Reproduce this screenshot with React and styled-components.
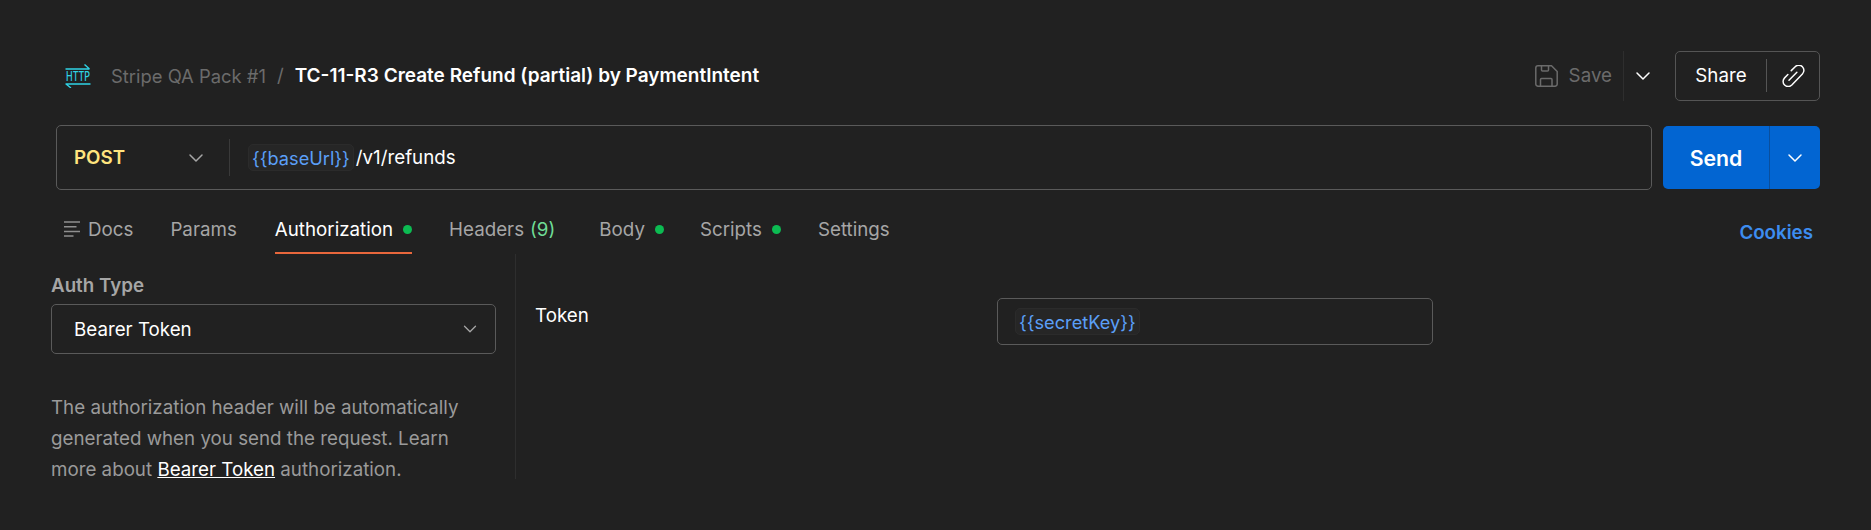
import React from "react"
import styled, { createGlobalStyle } from "styled-components"
import { ChevronDown } from "lucide-react"

const GlobalStyle = createGlobalStyle`
  html, body {
    margin: 0;
    padding: 0;
    background: #212121;
    color: #fff;
    font-family: Inter, "Liberation Sans", sans-serif;
    overflow: hidden;
  }
  * {
    box-sizing: border-box;
  }
`

const Page = styled.div`
  width: 1871px;
  height: 530px;
  padding: 50px 51px 0 56px;
  background: #212121;
`

const TitleRow = styled.div`
  display: flex;
  align-items: center;
  justify-content: space-between;
  height: 51px;
  padding-left: 9px;
`

const Crumbs = styled.div`
  display: flex;
  align-items: center;
  font-size: 18.75px;
`

const Collection = styled.span`
  margin-left: 20px;
  font-size: 18.4px;
  color: #6b6b6b;
`

const Slash = styled.span`
  margin: 0 11px;
  color: #6b6b6b;
`

const RequestName = styled.span`
  font-size: 19px;
  font-weight: 600;
  color: #fff;
`

const TitleActions = styled.div`
  display: flex;
  align-items: center;
`

const SaveLabel = styled.span`
  display: flex;
  align-items: center;
  gap: 11px;
  font-size: 18.75px;
  color: #6b6b6b;
`

const SaveCaret = styled.span`
  display: flex;
  align-items: center;
  justify-content: center;
  width: 38px;
  height: 50px;
  margin-left: 11px;
  border-left: 1px solid #2e2e2e;
  color: #fff;
`

const ShareGroup = styled.div`
  display: flex;
  align-items: center;
  width: 145px;
  height: 50px;
  margin-left: 14px;
  border: 1px solid #555;
  border-radius: 5px;
`

const ShareLabel = styled.span`
  width: 91px;
  height: 33px;
  display: flex;
  align-items: center;
  justify-content: center;
  border-right: 1px solid #555;
  font-size: 18.75px;
`

const ShareIcon = styled.span`
  flex: 1;
  display: flex;
  align-items: center;
  justify-content: center;
`

const UrlRow = styled.div`
  display: flex;
  gap: 11px;
  margin-top: 24px;
`

const UrlBox = styled.div`
  flex: 1;
  display: flex;
  align-items: center;
  height: 65px;
  border: 1px solid #5a5a5a;
  border-radius: 5px;
`

const MethodSelect = styled.div`
  display: flex;
  align-items: center;
  justify-content: space-between;
  width: 173px;
  height: 37px;
  padding: 0 21px 0 17px;
  margin-right: 18px;
  border-right: 1px solid #3a3a3a;
  color: #a6a6a6;
`

const Method = styled.span`
  font-size: 18.75px;
  font-weight: 600;
  color: #ffe47e;
`

const Variable = styled.span`
  display: inline-flex;
  align-items: center;
  height: 27px;
  padding: 0 3px;
  border: 1px solid #2b2b2b;
  border-radius: 5px;
  background: #262626;
  color: #5b9ff7;
  font-size: 18.2px;
`

const UrlPath = styled.span`
  margin-left: 2px;
  font-size: 18.75px;
  color: #fff;
`

const SendGroup = styled.div`
  display: flex;
  width: 157px;
  height: 63px;
  margin-top: 1px;
  border-radius: 5px;
  background: #0265d2;
`

const SendLabel = styled.span`
  width: 107px;
  display: flex;
  align-items: center;
  justify-content: center;
  font-size: 21.25px;
  font-weight: 600;
  border-right: 1px solid #0a4f9e;
`

const SendCaret = styled.span`
  flex: 1;
  display: flex;
  align-items: center;
  justify-content: center;
`

const TabRow = styled.div`
  display: flex;
  align-items: flex-start;
  justify-content: space-between;
  height: 64px;
  padding-right: 7px;
`

const Tabs = styled.div`
  display: flex;
  padding-top: 24px;
  padding-left: 8px;
`

const Tab = styled.div`
  display: flex;
  align-items: center;
  gap: 10px;
  height: 40px;
  padding-bottom: 8px;
  margin-right: ${(p) => p.$gap}px;
  font-size: 18.75px;
  color: ${(p) => (p.$active ? "#fff" : "#a6a6a6")};
  border-bottom: 2px solid ${(p) => (p.$active ? "#e8673c" : "transparent")};
`

const Dot = styled.span`
  width: 9px;
  height: 9px;
  border-radius: 50%;
  background: #0cbb52;
`

const Count = styled.span`
  margin-left: -4px;
  color: #6fdc96;
`

const DocsIcon = styled.svg`
  width: 16px;
  height: 16px;
  margin-right: -2px;
`

const Cookies = styled.span`
  margin-top: 31px;
  font-size: 18.75px;
  font-weight: 600;
  color: #3d8df0;
`

const AuthBody = styled.div`
  display: flex;
  margin-left: -5px;
`

const AuthSide = styled.div`
  width: 465px;
  height: 225px;
  padding-top: 21px;
  padding-right: 19px;
  border-right: 1px solid #2e2e2e;
`

const AuthLabel = styled.div`
  font-size: 18.75px;
  font-weight: 600;
  line-height: 22px;
  color: #a6a6a6;
`

const AuthSelect = styled.div`
  display: flex;
  align-items: center;
  justify-content: space-between;
  height: 50px;
  margin-top: 7px;
  padding: 0 14px 0 22px;
  border: 1px solid #5a5a5a;
  border-radius: 5px;
  font-size: 18.75px;
  color: #fff;
`

const AuthHelp = styled.p`
  margin: 38px 0 0;
  font-size: 18.75px;
  line-height: 31px;
  color: #9a9a9a;
`

const HelpLink = styled.a`
  color: #fff;
  text-decoration: underline;
`

const TokenPane = styled.div`
  flex: 1;
  display: flex;
  align-items: flex-start;
  padding-top: 44px;
  padding-left: 19px;
`

const TokenLabel = styled.div`
  width: 462px;
  padding-top: 6px;
  font-size: 18.75px;
  color: #fff;
`

const TokenInput = styled.div`
  display: flex;
  align-items: center;
  width: 436px;
  height: 47px;
  padding-left: 17px;
  border: 1px solid #5a5a5a;
  border-radius: 5px;
`

const HttpIcon = () => (
  <svg width="26" height="24" viewBox="0 0 26 24" fill="none" stroke="#2fd3e6" strokeWidth="1.4">
    <path d="M0.500 5h24M19.500 0.500l5 4.500" />
    <path d="M0.500 20h25M6 24l-5-4" />
    <text
      x="1"
      y="17"
      fontFamily="Inter, sans-serif"
      fontSize="12.4"
      fontWeight="500"
      fill="#2fd3e6"
      stroke="none"
      textLength="24"
      lengthAdjust="spacingAndGlyphs"
    >
      HTTP
    </text>
  </svg>
)

const SaveIcon = () => (
  <svg width="23" height="22" viewBox="0 0 23 22" fill="none" stroke="#6b6b6b" strokeWidth="1.5">
    <path d="M3 .8h13.500l5.700 5.700V19a2.200 2.200 0 0 1-2.200 2.200H3A2.200 2.200 0 0 1 .8 19V3A2.200 2.200 0 0 1 3 .8z" />
    <path d="M6.500 1v4a1 1 0 0 0 1 1h5a1 1 0 0 0 1-1V1" />
    <path d="M5.500 21v-6.500a1 1 0 0 1 1-1h9.500a1 1 0 0 1 1 1V21" />
  </svg>
)

const LinkIcon = () => (
  <svg width="23" height="22" viewBox="3 1 19 19.500" fill="none" stroke="#fff" strokeWidth="1.300" strokeLinecap="round">
    <path d="M8.500 14.500L15.500 7.500" />
    <path d="M10.500 6L14 2.500a4.500 4.500 0 0 1 6.400 6.400L11 18.800a4.500 4.500 0 0 1-6.400-6.400L7.500 9.500" />
  </svg>
)

const App = () => {
  return (
    <>
      <GlobalStyle />
      <Page>
        <TitleRow>
          <Crumbs>
            <HttpIcon />
            <Collection>Stripe QA Pack #1</Collection>
            <Slash>/</Slash>
            <RequestName>TC-11-R3 Create Refund (partial) by PaymentIntent</RequestName>
          </Crumbs>
          <TitleActions>
            <SaveLabel>
              <SaveIcon />
              Save
            </SaveLabel>
            <SaveCaret>
              <ChevronDown size={24} strokeWidth={1.5} />
            </SaveCaret>
            <ShareGroup>
              <ShareLabel>Share</ShareLabel>
              <ShareIcon>
                <LinkIcon />
              </ShareIcon>
            </ShareGroup>
          </TitleActions>
        </TitleRow>
        <UrlRow>
          <UrlBox>
            <MethodSelect>
              <Method>POST</Method>
              <ChevronDown size={24} strokeWidth={1.5} />
            </MethodSelect>
            <Variable>{"{{baseUrl}}"}</Variable>
            <UrlPath>/v1/refunds</UrlPath>
          </UrlBox>
          <SendGroup>
            <SendLabel>Send</SendLabel>
            <SendCaret>
              <ChevronDown size={24} strokeWidth={1.5} />
            </SendCaret>
          </SendGroup>
        </UrlRow>
        <TabRow>
          <Tabs>
            <Tab $gap={37}>
              <DocsIcon viewBox="0 0 16 16" fill="none" stroke="#8f8f8f" strokeWidth="1.6">
                <path d="M0 1h16M0 5.700h12.500M0 10.500h16M0 15h9.500" />
              </DocsIcon>
              Docs
            </Tab>
            <Tab $gap={38}>Params</Tab>
            <Tab $gap={37} $active>
              Authorization
              <Dot />
            </Tab>
            <Tab $gap={44}>
              Headers
              <Count>(9)</Count>
            </Tab>
            <Tab $gap={36}>
              Body
              <Dot />
            </Tab>
            <Tab $gap={37}>
              Scripts
              <Dot />
            </Tab>
            <Tab $gap={0}>Settings</Tab>
          </Tabs>
          <Cookies>Cookies</Cookies>
        </TabRow>
        <AuthBody>
          <AuthSide>
            <AuthLabel>Auth Type</AuthLabel>
            <AuthSelect>
              Bearer Token
              <ChevronDown size={22} strokeWidth={1.4} color="#a6a6a6" />
            </AuthSelect>
            <AuthHelp>
              The authorization header will be automatically generated when you send the request. Learn
              more about <HelpLink>Bearer Token</HelpLink> authorization.
            </AuthHelp>
          </AuthSide>
          <TokenPane>
            <TokenLabel>Token</TokenLabel>
            <TokenInput>
              <Variable>{"{{secretKey}}"}</Variable>
            </TokenInput>
          </TokenPane>
        </AuthBody>
      </Page>
    </>
  )
}

export default App
